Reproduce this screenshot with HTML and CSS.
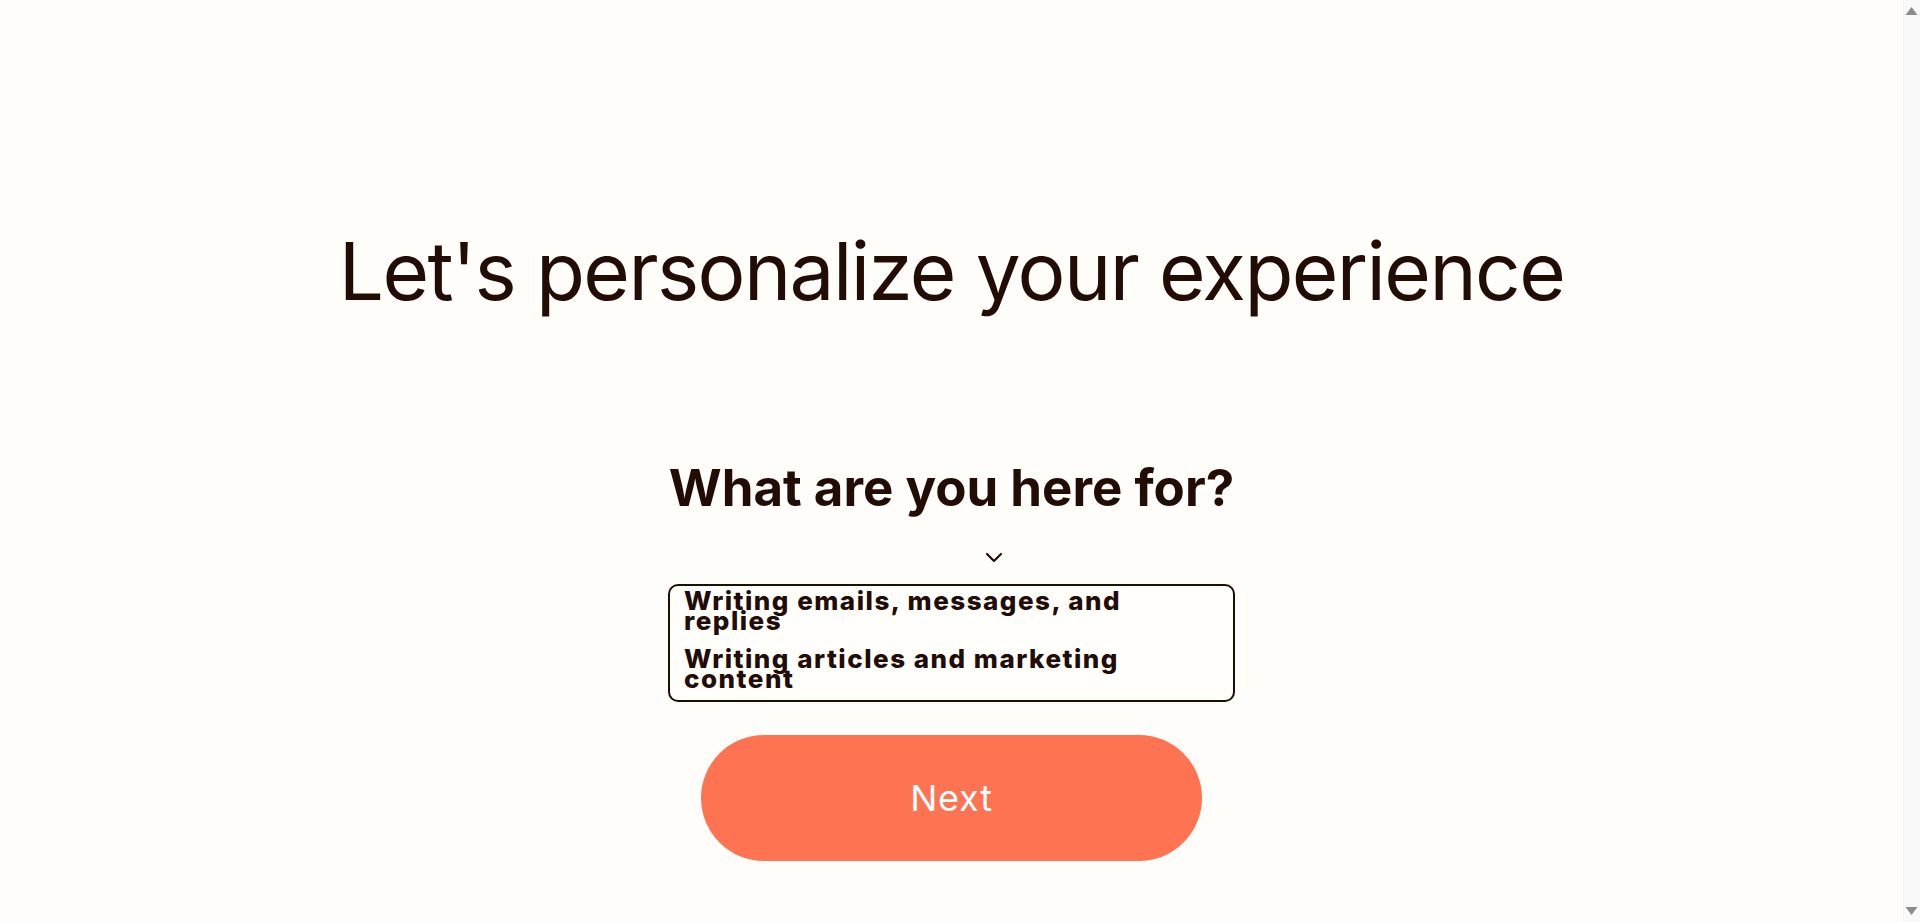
FILE: index.html
```html
<!DOCTYPE html>
<html lang="en">
<head>
<meta charset="utf-8">
<title>Personalize</title>
<link rel="stylesheet" href="styles.css">
</head>
<body>
<main class="page">
  <h1 class="title">Let's personalize your experience</h1>
  <section class="form">
    <h2 class="question">What are you here for?</h2>
    <div class="chevron-row">
      <svg class="chevron" width="18" height="11" viewBox="0 0 18 11" aria-hidden="true"><path d="M2 2 L9 9 L16 2" fill="none" stroke="#220c06" stroke-width="2.2" stroke-linecap="round" stroke-linejoin="round"/></svg>
    </div>
    <div class="options" role="listbox" aria-multiselectable="true">
      <div class="option" role="option">Writing emails, messages, and replies</div>
      <div class="option" role="option">Writing articles and marketing content</div>
    </div>
    <button class="next" type="button">Next</button>
  </section>
</main>
<div class="scrolltrack" aria-hidden="true">
  <svg class="arrow" width="17" height="17" viewBox="0 0 17 17"><path d="M2.5 15 L8.5 7 L14.5 15 Z" fill="#8b8b8b"/></svg>
  <svg class="arrow" width="17" height="17" viewBox="0 0 17 17"><path d="M2.5 2 L8.5 10 L14.5 2 Z" fill="#8b8b8b"/></svg>
</div>
</body>
</html>
```
FILE: styles.css
```css
html {
  background: #fefdf9;
}

body {
  margin: 0;
  height: 100vh;
  overflow: hidden;
  display: flex;
  font-family: Inter, "Noto Sans", sans-serif;
  color: #220c06;
  background: #fefdf9;
}

.page {
  flex: 1;
  display: flex;
  flex-direction: column;
  align-items: center;
  padding-top: 231px;
}

.scrolltrack {
  width: 17px;
  flex: none;
  display: flex;
  flex-direction: column;
  justify-content: space-between;
  background: #f9f9f9;
  box-shadow: inset 1px 0 0 #f4f4f2;
}

.arrow {
  display: block;
}

.title {
  margin: 0;
  font-size: 80px;
  font-weight: 400;
  line-height: 80px;
  letter-spacing: -1.6px;
  white-space: nowrap;
}

.form {
  display: flex;
  flex-direction: column;
  align-items: center;
  width: 567px;
  margin-top: 152px;
}

.question {
  margin: 0;
  font-size: 51px;
  font-weight: 700;
  line-height: 50px;
  letter-spacing: 0;
  white-space: nowrap;
}

.chevron-row {
  align-self: stretch;
  display: flex;
  padding-left: 317px;
  margin-top: 39px;
  height: 11px;
}

.chevron {
  display: block;
}

.options {
  align-self: stretch;
  box-sizing: border-box;
  margin-top: 21px;
  height: 118px;
  border: 2px solid #220c06;
  border-radius: 10px;
  padding: 5px 14px 0;
  display: flex;
  flex-direction: column;
  gap: 18px;
  background: #fffefb;
}

.option {
  width: 490px;
  font-size: 26px;
  font-weight: 800;
  line-height: 20px;
  letter-spacing: 1.5px;
}

.next {
  margin-top: 33px;
  width: 501px;
  height: 126px;
  border: none;
  border-radius: 63px;
  background: #fe7351;
  color: #ffffff;
  font-family: Inter, "Noto Sans", sans-serif;
  font-size: 36px;
  font-weight: 400;
  letter-spacing: 0.8px;
  cursor: pointer;
}
```
